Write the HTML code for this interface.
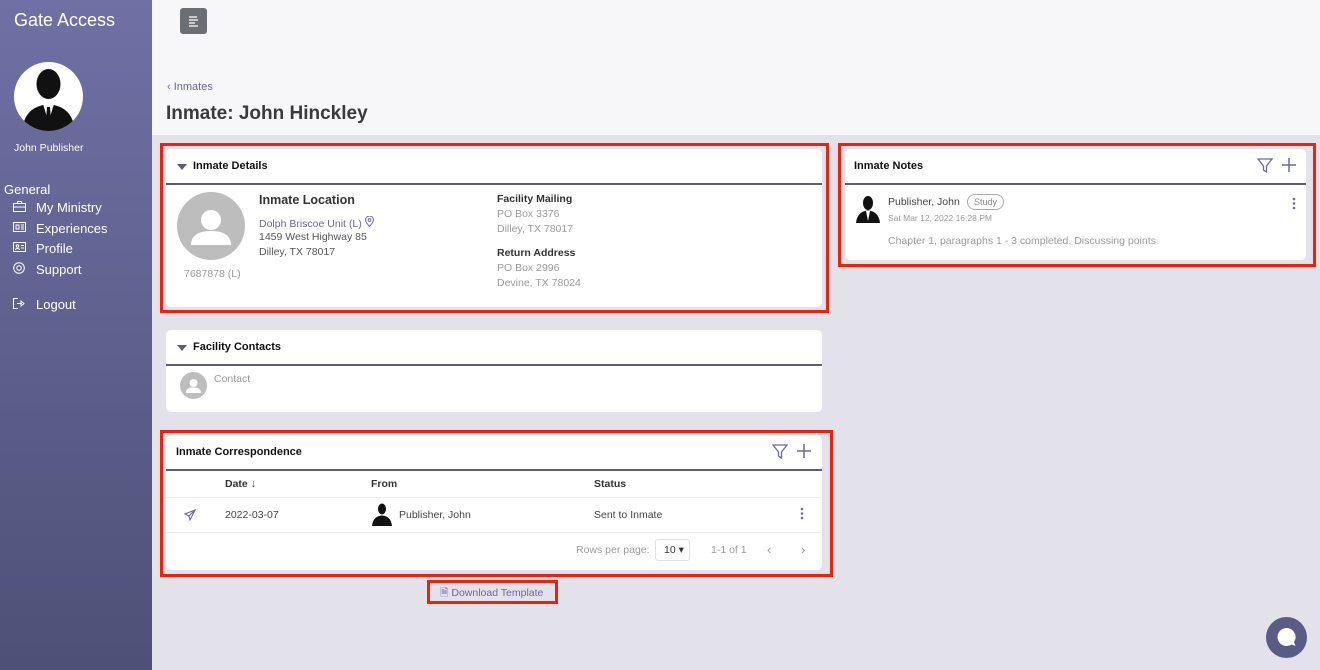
<!DOCTYPE html>
<html><head><style>
*{box-sizing:border-box;margin:0;padding:0}
body{width:1320px;height:670px;overflow:hidden;font-family:"Liberation Sans",sans-serif;background:#e3e2eb;position:relative;color:#333}
.a{position:absolute}
#side{left:0;top:0;width:152px;height:670px;background:linear-gradient(#6f71a5,#4e5077);color:#fff}
.card{position:absolute;background:#fff;border-radius:5px}
.hd{position:absolute;left:0;right:0;top:0;height:36px;border-bottom:2px solid #5d5a8a}
.ttl{position:absolute;font-weight:bold;font-size:11px;color:#111;top:11px}
.red{position:absolute;border:3px solid #f0200f}
.tri{position:absolute;left:11px;top:15px;width:0;height:0;border-left:5px solid transparent;border-right:5px solid transparent;border-top:6px solid #5d5a8a}
.g{color:#9a9a9a;font-size:10.5px}
.nav{position:absolute;left:36px;font-size:13px}
</style></head><body>
<div id="side" class="a">
<div class="a" style="left:14px;top:10px;font-size:18px">Gate Access</div>
<div class="a" style="left:14px;top:62px;width:69px;height:69px;border-radius:50%;background:#fff;overflow:hidden">
<svg width="69" height="69" viewBox="0 0 69 69"><ellipse cx="34.5" cy="22" rx="12" ry="15" fill="#111"/><path d="M8 69 C10 50 20 44 34.5 42 C49 44 59 50 61 69Z" fill="#111"/><path d="M29 42 L34.5 60 L40 42Z" fill="#fff"/><path d="M33 45 L36 45 L37 58 L34.5 62 L32 58Z" fill="#111"/></svg></div>
<div class="a" style="left:14px;top:142px;font-size:10.5px">John Publisher</div>
<div class="a" style="left:4px;top:182px;font-size:13px">General</div>
<svg class="a" style="left:13px;top:201px" width="13" height="11" fill="none" stroke="#fff" stroke-width="1"><rect x="0.5" y="2.5" width="12" height="8"/><path d="M4.5 2.5V0.5H8.5V2.5M0.5 6H12.5"/></svg><div class="nav" style="top:200px">My Ministry</div>
<svg class="a" style="left:13px;top:222px" width="13" height="10" fill="none" stroke="#fff" stroke-width="1"><rect x="0.5" y="0.5" width="12" height="9"/><path d="M3 3h3v4H3zM8 3h3M8 5h3M8 7h3"/></svg><div class="nav" style="top:221px">Experiences</div>
<svg class="a" style="left:13px;top:242px" width="13" height="10" fill="none" stroke="#fff" stroke-width="1"><rect x="0.5" y="0.5" width="12" height="9"/><circle cx="4.5" cy="4" r="1.3"/><path d="M2.5 8c0-2 4-2 4 0M8 3.5h3M8 6h3"/></svg><div class="nav" style="top:241px">Profile</div>
<svg class="a" style="left:13px;top:262px" width="12" height="12" fill="none" stroke="#fff" stroke-width="1"><circle cx="6" cy="6" r="5.3"/><circle cx="6" cy="6" r="2.3"/></svg><div class="nav" style="top:262px">Support</div>
<svg class="a" style="left:13px;top:298px" width="13" height="11" fill="none" stroke="#fff" stroke-width="1"><path d="M5 0.5H0.5v10H5M4 5.5h5M8 3l3 2.5-3 2.5z"/></svg><div class="nav" style="top:297px">Logout</div>
</div>
<div class="a" style="left:152px;top:0;width:1168px;height:135px;background:#f7f7f9"></div>
<div class="a" style="left:180px;top:8px;width:27px;height:26px;background:#6b6f74;border-radius:3px"><svg width="27" height="26" stroke="#fff" stroke-width="1.2"><path d="M9 9h8M9 12h9M9 15h6M9 18h9"/></svg></div>
<div class="a" style="left:167px;top:81px;font-size:11px;color:#6a68a0">‹ Inmates</div>
<div class="a" style="left:166px;top:103px;font-size:19px;font-weight:bold;color:#3a3a3a">Inmate: John Hinckley</div>

<div class="red" style="left:160px;top:143px;width:669px;height:170px"></div>
<div class="card" style="left:166px;top:149px;width:656px;height:158px">
<div class="hd"></div><div class="tri"></div><div class="ttl" style="left:27px">Inmate Details</div>
<div class="a" style="left:11px;top:43px;width:68px;height:68px;border-radius:50%;background:#bdbdbd"><svg width="68" height="68"><circle cx="34" cy="28" r="10" fill="#fff"/><path d="M14 53 C14 42 24 39 34 39 C44 39 54 42 54 53Z" fill="#fff"/></svg></div>
<div class="a g" style="left:18px;top:119px">7687878 (L)</div>
<div class="a" style="left:93px;top:44px;font-weight:bold;font-size:12.5px;color:#333">Inmate Location</div>
<div class="a" style="left:93px;top:67px;font-size:10.5px;color:#6a68a0">Dolph Briscoe Unit (L) <svg width="9" height="11" fill="none" stroke="#6a68a0" stroke-width="1"><path d="M4.5 10.5C1 6.5 0.5 5 0.5 4a4 4 0 0 1 8 0c0 1-.5 2.5-4 6.5z"/><circle cx="4.5" cy="4" r="1.4"/></svg></div>
<div class="a" style="left:93px;top:81px;font-size:10.5px;color:#555;line-height:14.5px">1459 West Highway 85<br>Dilley, TX 78017</div>
<div class="a" style="left:331px;top:44px;font-weight:bold;font-size:10.5px;color:#333">Facility Mailing</div>
<div class="a g" style="left:331px;top:58px;line-height:14.5px">PO Box 3376<br>Dilley, TX 78017</div>
<div class="a" style="left:331px;top:98px;font-weight:bold;font-size:10.5px;color:#333">Return Address</div>
<div class="a g" style="left:331px;top:112px;line-height:14.5px">PO Box 2996<br>Devine, TX 78024</div>
</div>

<div class="card" style="left:166px;top:330px;width:656px;height:82px">
<div class="hd"></div><div class="tri"></div><div class="ttl" style="left:27px">Facility Contacts</div>
<div class="a" style="left:14px;top:42px;width:27px;height:27px;border-radius:50%;background:#bdbdbd"><svg width="27" height="27"><circle cx="13.5" cy="11" r="4" fill="#fff"/><path d="M6 21 C6 16 10 15.5 13.5 15.5 C17 15.5 21 16 21 21Z" fill="#fff"/></svg></div>
<div class="a g" style="left:48px;top:43px">Contact</div>
</div>

<div class="red" style="left:160px;top:430px;width:673px;height:147px"></div>
<div class="card" style="left:166px;top:435px;width:656px;height:135px">
<div class="hd"></div><div class="ttl" style="left:10px;top:11px">Inmate Correspondence</div>
<svg class="a" style="left:606px;top:9px" width="16" height="15" fill="none" stroke="#6a68a0" stroke-width="1.3"><path d="M1 1h14L9.5 8v6L6.5 12V8z"/></svg>
<svg class="a" style="left:631px;top:9px" width="14" height="14" stroke="#6a68a0" stroke-width="1.5"><path d="M7 0v14M0 7h14"/></svg>
<div class="a" style="left:59px;top:43px;font-size:10.5px;font-weight:bold">Date ↓</div>
<div class="a" style="left:205px;top:43px;font-size:10.5px;font-weight:bold">From</div>
<div class="a" style="left:428px;top:43px;font-size:10.5px;font-weight:bold">Status</div>
<div class="a" style="left:0;right:0;top:62px;border-top:1px solid #eee"></div>
<svg class="a" style="left:18px;top:74px" width="12" height="12" fill="none" stroke="#6a68a0" stroke-width="1.1"><path d="M11 1L1 5l4 2 1 4z M11 1L5 7"/></svg>
<div class="a" style="left:59px;top:74px;font-size:10.5px;color:#444">2022-03-07</div>
<svg class="a" style="left:205px;top:67px" width="22" height="24"><ellipse cx="11" cy="7" rx="4" ry="5.5" fill="#111"/><path d="M1 24 C2 16 6 14 11 13.5 C16 14 20 16 21 24Z" fill="#111"/></svg>
<div class="a" style="left:233px;top:74px;font-size:10.5px;color:#444">Publisher, John</div>
<div class="a" style="left:428px;top:74px;font-size:10.5px;color:#444">Sent to Inmate</div>
<svg class="a" style="left:634px;top:72px" width="4" height="13" fill="#6a68a0"><circle cx="2" cy="2" r="1.3"/><circle cx="2" cy="6.5" r="1.3"/><circle cx="2" cy="11" r="1.3"/></svg>
<div class="a" style="left:0;right:0;top:97px;border-top:1px solid #eee"></div>
<div class="a g" style="left:410px;top:109px">Rows per page:</div>
<div class="a" style="left:489px;top:104px;width:35px;height:22px;border:1px solid #e2e2e2;border-radius:3px;font-size:10.5px;padding:4px 0 0 8px">10 ▾</div>
<div class="a g" style="left:545px;top:109px">1-1 of 1</div>
<div class="a g" style="left:601px;top:107px;font-size:13px">‹</div><div class="a g" style="left:635px;top:107px;font-size:13px">›</div>
</div>
<div class="red" style="left:427px;top:580px;width:131px;height:24px"></div>
<div class="a" style="left:440px;top:585px;font-size:10.5px;color:#6a68a0">🗎 Download Template</div>

<div class="red" style="left:838px;top:143px;width:478px;height:124px"></div>
<div class="card" style="left:845px;top:149px;width:461px;height:111px">
<div class="hd"></div><div class="ttl" style="left:9px">Inmate Notes</div>
<svg class="a" style="left:412px;top:9px" width="16" height="15" fill="none" stroke="#6a68a0" stroke-width="1.3"><path d="M1 1h14L9.5 8v6L6.5 12V8z"/></svg>
<svg class="a" style="left:437px;top:9px" width="14" height="14" stroke="#6a68a0" stroke-width="1.5"><path d="M7 0v14M0 7h14"/></svg>
<svg class="a" style="left:10px;top:45px" width="26" height="29"><ellipse cx="13" cy="9" rx="5" ry="7" fill="#111"/><path d="M1 29 C2 20 7 17 13 16.5 C19 17 24 20 25 29Z" fill="#111"/><path d="M11 17 L13 27 L15 17Z" fill="#fff"/></svg>
<div class="a" style="left:43px;top:47px;font-size:10.5px;color:#444">Publisher, John</div>
<div class="a" style="left:122px;top:45px;border:1px solid #aaa;border-radius:10px;font-size:9px;color:#888;padding:2px 6px">Study</div>
<div class="a" style="left:43px;top:64px;font-size:8.5px;color:#999">Sat Mar 12, 2022 16:28 PM</div>
<svg class="a" style="left:447px;top:48px" width="4" height="13" fill="#6a68a0"><circle cx="2" cy="2" r="1.3"/><circle cx="2" cy="6.5" r="1.3"/><circle cx="2" cy="11" r="1.3"/></svg>
<div class="a g" style="left:43px;top:86px">Chapter 1, paragraphs 1 - 3 completed. Discussing points</div>
</div>
<div class="a" style="left:1266px;top:617px;width:41px;height:41px;border-radius:50%;background:#5a5c85"><svg width="41" height="41"><path d="M20.5 11a9 9 0 1 0 5 16.5l4 1.5-1.5-4A9 9 0 0 0 20.5 11z" fill="#fff"/></svg></div>
</body></html>
